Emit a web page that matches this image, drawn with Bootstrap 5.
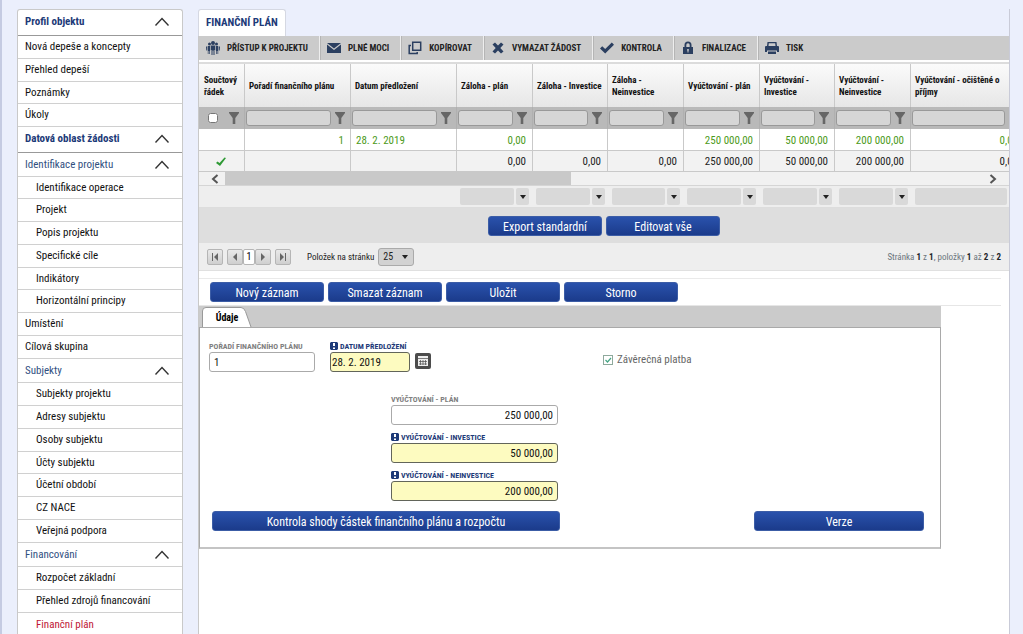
<!DOCTYPE html>
<html lang="cs">
<head>
<meta charset="utf-8">
<meta name="viewport" content="width=device-width, initial-scale=1">
<title>Finanční plán</title>
<link href="https://cdn.jsdelivr.net/npm/bootstrap@5.3.0/dist/css/bootstrap.min.css" rel="stylesheet">
<style>
:root{--navy:#1d3a78;--ink:#2b3f60;--line:#c9c9c9;--band:#cbcbcb}
body{background:#ebeffc;color:#111;font-family:"Roboto Condensed","Liberation Sans Narrow","Liberation Sans",sans-serif;font-size:11px;line-height:14px}
button,input,select{font-family:inherit}
a{color:inherit;text-decoration:none}
.shell{min-height:100vh;border-left:2px solid #c5cbe2;padding:9px 13px 0 15px;gap:15px}
/* side menu */
.side{width:166px;border:1px solid var(--line);border-bottom:0;border-radius:3px 3px 0 0}
.side a{height:23px;padding:0 12px 0 7px;border-bottom:1px solid #d0d0d0}
.side li:nth-child(4n) > a.leaf{height:22px}
.side a.deep{padding-left:18px}
.side a.top-group{height:26px;padding-bottom:2px;color:var(--navy);font-weight:700;border-bottom-color:#999}
.side a.sub-group{height:24px;color:#31507f}
.side a.current{color:#c01736}
.chev{width:16px;height:10px;fill:none;stroke:#333;stroke-width:1.4}
/* main */
.main{min-width:0;border-right:1px solid #c9cbd8}
.page-tab{background:#fff;height:27px;padding:0 7px;border:1px solid #d5d8e2;border-bottom:0;border-radius:3px 3px 0 0;color:var(--navy);font-size:11px;font-weight:700}
.sheet{border-left:1px solid var(--line)}
.tools{background:var(--band);height:24px}
.tools button{border:0;border-right:1px solid #eee;box-shadow:1px 0 #b5b5b5;background:none;font-size:9px;font-weight:700;color:#222;padding:0 11px 0 7px;gap:7px}
.tools button:last-child{border:0;box-shadow:none}
.tools svg{width:14px;height:14px;fill:var(--ink);color:var(--ink)}
.grid-box{overflow:hidden;margin-top:2px;border-top:2px solid #dcdcdc}
.grid-table{width:826px;table-layout:fixed;border-collapse:separate;border-spacing:0;font-size:11px}
.grid-table th,.grid-table td{border-right:1px solid var(--line);padding:2px 6px 0 5px}
.grid-table thead th{height:43px;padding:1px 4px 0;font-size:9px;line-height:12px;background:linear-gradient(#fbfbfb,#e6e6e6)}
.grid-table thead th:first-child{padding-left:5px}
.grid-table .filters td{height:22px;background:#b9b9b9;border-color:#b0b0b0;padding:0 5px 0 1px}
.filters input[type=text]{min-width:0;height:16px;background:#d6d6d6;border:1px solid #999;border-radius:3px}
.filters input[type=checkbox]{width:10px;height:10px;margin:0}
.funnel{width:10px;height:12px;fill:#666;flex:none}
.grid-table .num{text-align:right}
.row-plan td{height:22px;color:#4c9a1a;border-bottom:1px solid var(--line)}
.row-sum td{height:21px;background:#f2f2f2;color:#222;border-bottom:1px solid var(--line)}
.hscroll{height:14px;background:#f1f1f1;padding:0 12px;border-bottom:1px solid #d5d5d5}
.hscroll svg{width:8px;height:10px;fill:none;stroke:#555;stroke-width:2}
.thumb{width:44%;background:#c9c9c9;margin-left:6px}
.aggs{height:22px;background:#eee;overflow:hidden;padding-left:261px;border-bottom:1px solid #ddd}
.agg{width:76px;flex:none;gap:2px;padding-right:7px}
.agg:nth-child(3){width:75px}
.agg button,.agg span{background:#d9d9d9;border:0;border-radius:2px;height:17px}
.agg button{width:13px}
.agg.wide{width:114px}
.caret{width:6px;height:4px;fill:#222;display:block}
.export{height:35px;background:#dedede;gap:4px}
.pager{height:28px;background:#eee;font-size:9px;color:#222;padding:0 8px;border-bottom:1px solid #e0e0e0}
.pager button{width:16px;height:16px;border:1px solid #b5b5b5;border-radius:2px;background:linear-gradient(#e9e9e9,#cfcfcf)}
.pager button svg{width:8px;height:8px;fill:#666;display:block}
.pager .pg{width:12px;background:#fff;font-size:10px;line-height:14px}
.pager select{height:18px;width:36px;border:1px solid #aaa;border-radius:3px;background:#d2d2d2;appearance:none;padding:0 4px;font-size:10px;color:#222}
.select-wrap .caret{position:absolute;right:6px;top:7px}
.blue{height:20px;width:114px;border:1px solid #3c5da6;border-radius:3px;background:linear-gradient(#2a52ac,#1b3b8b);color:#fff;font-size:12px;line-height:20px;font-weight:400}
.actions{margin:7px 8px 0 0;padding:3px 0 3px 11px;gap:4px;border-top:1px solid #eaeaea;border-bottom:1px solid #e6e6e6}
.card-area{max-width:742px}
.tabs{height:21px;background:var(--band);padding:1px 0 0 3px}
.tabs button{width:50px;height:20px;border:0;background:none;font-size:10px;font-weight:700;padding:2px 0 0}
.tabs button svg{position:absolute;left:0;top:0;width:50px;height:20px;z-index:-1}
.panel{border:1px solid #a9a9a9;border-bottom:2px solid #c4c4c4;padding:14px 16px 16px 9px}
.fld label{font-size:8px;line-height:10px;height:10px;font-weight:700;color:#808080;white-space:nowrap}
.fld input{display:block;height:20px;border:1px solid #aaa;border-radius:3px;padding:0 4px;font-size:11px;color:#111;width:100%}
.fld.req label{color:var(--navy)}
.fld.req input{background:#fdfbc0;border-color:#62655a}
.order{width:106px}
.submitted{width:80px;margin-left:15px}
.fld.submitted input{padding:0 1px}
.flag{width:8px;height:8px;fill:var(--navy);margin-right:2px;vertical-align:-1px}
.cal{width:16px;height:16px;border:0;background:none;margin:0 0 3px 5px}
.final{margin:0 0 5px 172px;gap:4px;color:#666}
.final input{appearance:none;width:10px;height:10px;margin:0;border:1px solid #8ea99c;background:#fff url("data:image/svg+xml,%3Csvg xmlns='http://www.w3.org/2000/svg' viewBox='0 0 8 8'%3E%3Cpath d='M1.500 4l2 2 3.500-4' fill='none' stroke='%2345a585' stroke-width='1.200'/%3E%3C/svg%3E")}
.amounts{width:167px;margin:23px 0 10px 182px;gap:8px}
.amounts input{text-align:right}
.foot{padding-left:3px}
.check-btn{width:348px}
.version-btn{width:170px}
</style>
</head>
<body>
<svg class="d-none">
 <symbol id="chev" viewBox="0 0 16 10"><path d="M1.500 8.500 8 1.500l6.500 7"/></symbol>
 <symbol id="funnel" viewBox="0 0 10 12"><path d="M0 0h10v1L6.300 6v6H3.700V6L0 1z"/></symbol>
 <symbol id="caret" viewBox="0 0 6 4"><path d="M0 0h6L3 4z"/></symbol>
 <symbol id="flag" viewBox="0 0 8 8"><path fill-rule="evenodd" d="M1 0h6l1 1v6L7 8H1L0 7V1zM3 1v3h2V1zM3 5.500V7h2V5.500z"/></symbol>
</svg>
<div class="shell d-flex align-items-stretch">
 <nav class="side bg-white flex-shrink-0" aria-label="Navigace">
  <ul class="list-unstyled mb-0">
   <li><a href="#" class="top-group d-flex align-items-center justify-content-between">Profil objektu<svg class="chev"><use href="#chev"/></svg></a></li>
   <li><a href="#" class="leaf d-flex align-items-center">Nová depeše a koncepty</a></li>
   <li><a href="#" class="leaf d-flex align-items-center">Přehled depeší</a></li>
   <li><a href="#" class="leaf d-flex align-items-center">Poznámky</a></li>
   <li><a href="#" class="leaf d-flex align-items-center">Úkoly</a></li>
   <li><a href="#" class="top-group d-flex align-items-center justify-content-between">Datová oblast žádosti<svg class="chev"><use href="#chev"/></svg></a></li>
   <li><a href="#" class="sub-group d-flex align-items-center justify-content-between">Identifikace projektu<svg class="chev"><use href="#chev"/></svg></a></li>
   <li><a href="#" class="leaf deep d-flex align-items-center">Identifikace operace</a></li>
   <li><a href="#" class="leaf deep d-flex align-items-center">Projekt</a></li>
   <li><a href="#" class="leaf deep d-flex align-items-center">Popis projektu</a></li>
   <li><a href="#" class="leaf deep d-flex align-items-center">Specifické cíle</a></li>
   <li><a href="#" class="leaf deep d-flex align-items-center">Indikátory</a></li>
   <li><a href="#" class="leaf deep d-flex align-items-center">Horizontální principy</a></li>
   <li><a href="#" class="leaf d-flex align-items-center">Umístění</a></li>
   <li><a href="#" class="leaf d-flex align-items-center">Cílová skupina</a></li>
   <li><a href="#" class="sub-group d-flex align-items-center justify-content-between">Subjekty<svg class="chev"><use href="#chev"/></svg></a></li>
   <li><a href="#" class="leaf deep d-flex align-items-center">Subjekty projektu</a></li>
   <li><a href="#" class="leaf deep d-flex align-items-center">Adresy subjektu</a></li>
   <li><a href="#" class="leaf deep d-flex align-items-center">Osoby subjektu</a></li>
   <li><a href="#" class="leaf deep d-flex align-items-center">Účty subjektu</a></li>
   <li><a href="#" class="leaf deep d-flex align-items-center">Účetní období</a></li>
   <li><a href="#" class="leaf deep d-flex align-items-center">CZ NACE</a></li>
   <li><a href="#" class="leaf deep d-flex align-items-center">Veřejná podpora</a></li>
   <li><a href="#" class="sub-group d-flex align-items-center justify-content-between">Financování<svg class="chev"><use href="#chev"/></svg></a></li>
   <li><a href="#" class="leaf deep d-flex align-items-center">Rozpočet základní</a></li>
   <li><a href="#" class="leaf deep d-flex align-items-center">Přehled zdrojů financování</a></li>
   <li><a href="#" class="leaf deep current border-0 d-flex align-items-center" aria-current="page">Finanční plán</a></li>
  </ul>
 </nav>

 <main class="main flex-grow-1 d-flex flex-column">
  <div class="d-flex"><h1 class="page-tab m-0 d-flex align-items-center">FINANČNÍ PLÁN</h1></div>
  <div class="sheet bg-white flex-grow-1">
   <div class="tools d-flex">
    <button type="button" class="d-flex align-items-center"><svg viewBox="0 0 14 14"><circle cx="7" cy="2" r="2"/><circle cx="3.500" cy="3" r="1.500"/><circle cx="10.500" cy="3" r="1.500"/><path d="M4.800 4.500h4.400V9H8.500v5h-1V9.500h-1V14h-1V9h-.7zM1.800 5h2.300v5h-.3v3h-.7v-3h-.6v3h-.7zM9.900 5h2.300v8h-.7v-3h-.6v3h-.7v-3h-.3zM0 5.500h1.200v4H.3zM12.800 5.500H14l-.3 4h-.9z"/></svg>PŘÍSTUP K PROJEKTU</button>
    <button type="button" class="d-flex align-items-center"><svg viewBox="0 0 14 14"><path d="M0 2h14L7 7.500zM0 3.500 7 9l7-5.500V12H0z"/></svg>PLNÉ MOCI</button>
    <button type="button" class="d-flex align-items-center"><svg viewBox="0 0 14 14"><path fill="none" stroke="currentColor" stroke-width="1.500" d="M4.700 1.200h8v8h-8zM3 4.500H1.200v8h8V11"/></svg>KOPÍROVAT</button>
    <button type="button" class="d-flex align-items-center"><svg viewBox="0 0 14 14"><path d="M1.500 3.500 4 1.500l3 3 3-3 2.500 2L9.300 7l3.200 3.500-2.500 2-3-3-3 3-2.500-2L4.700 7z"/></svg>VYMAZAT ŽÁDOST</button>
    <button type="button" class="d-flex align-items-center"><svg viewBox="0 0 14 14"><path d="M0 7.500 2.200 5.300l3 2.700L11.800 1.500 14 3.700 5.200 12.500z"/></svg>KONTROLA</button>
    <button type="button" class="d-flex align-items-center"><svg viewBox="0 0 14 14"><path fill-rule="evenodd" d="M2 6h1.500V4a3.500 3.500 0 0 1 7 0v2H12v7H2zm3.300 0h3.400V4a1.700 1.700 0 0 0-3.400 0zM6.200 8v1.500l.3.500v1.500h1V10l.3-.5V8z"/></svg>FINALIZACE</button>
    <button type="button" class="d-flex align-items-center"><svg viewBox="0 0 14 14"><path fill-rule="evenodd" d="M2.500 1h9l.5 4h1.500l.5 1v5h-2V9.500H2V11H0V6l.5-1H2zm1.300 1.200L3.500 5h7l-.3-2.800zM3 10.500h8V13H3z"/></svg>TISK</button>
   </div>

   <div class="grid-box">
    <table class="grid-table">
     <colgroup><col style="width:46px"><col style="width:106px"><col style="width:106px"><col style="width:76px"><col style="width:75px"><col style="width:76px"><col style="width:76px"><col style="width:75px"><col style="width:76px"><col></colgroup>
     <thead>
      <tr><th>Součtový řádek</th><th>Pořadí finančního plánu</th><th>Datum předložení</th><th>Záloha - plán</th><th class="text-nowrap">Záloha - Investice</th><th>Záloha - Neinvestice</th><th class="text-nowrap">Vyúčtování - plán</th><th>Vyúčtování - Investice</th><th>Vyúčtování - Neinvestice</th><th>Vyúčtování - očištěné o<br>příjmy</th></tr>
     </thead>
     <tbody>
      <tr class="filters">
       <td><div class="d-flex align-items-center justify-content-between ps-2"><input type="checkbox" aria-label="Součtový řádek"><svg class="funnel"><use href="#funnel"/></svg></div></td>
       <td><div class="d-flex align-items-center gap-1"><input type="text" class="flex-fill" aria-label="Filtr: pořadí"><svg class="funnel"><use href="#funnel"/></svg></div></td>
       <td><div class="d-flex align-items-center gap-1"><input type="text" class="flex-fill" aria-label="Filtr: datum"><svg class="funnel"><use href="#funnel"/></svg></div></td>
       <td><div class="d-flex align-items-center gap-1"><input type="text" class="flex-fill" aria-label="Filtr: záloha plán"><svg class="funnel"><use href="#funnel"/></svg></div></td>
       <td><div class="d-flex align-items-center gap-1"><input type="text" class="flex-fill" aria-label="Filtr: záloha investice"><svg class="funnel"><use href="#funnel"/></svg></div></td>
       <td><div class="d-flex align-items-center gap-1"><input type="text" class="flex-fill" aria-label="Filtr: záloha neinvestice"><svg class="funnel"><use href="#funnel"/></svg></div></td>
       <td><div class="d-flex align-items-center gap-1"><input type="text" class="flex-fill" aria-label="Filtr: vyúčtování plán"><svg class="funnel"><use href="#funnel"/></svg></div></td>
       <td><div class="d-flex align-items-center gap-1"><input type="text" class="flex-fill" aria-label="Filtr: vyúčtování investice"><svg class="funnel"><use href="#funnel"/></svg></div></td>
       <td><div class="d-flex align-items-center gap-1"><input type="text" class="flex-fill" aria-label="Filtr: vyúčtování neinvestice"><svg class="funnel"><use href="#funnel"/></svg></div></td>
       <td><div class="d-flex align-items-center gap-1"><input type="text" class="flex-fill" aria-label="Filtr: očištěné o příjmy"><svg class="funnel"><use href="#funnel"/></svg></div></td>
      </tr>
      <tr class="row-plan"><td></td><td class="num">1</td><td>28. 2. 2019</td><td class="num">0,00</td><td></td><td></td><td class="num">250 000,00</td><td class="num">50 000,00</td><td class="num">200 000,00</td><td class="num">0,00</td></tr>
      <tr class="row-sum"><td><svg class="d-block mx-auto" width="10" height="10" viewBox="0 0 10 10" fill="#2f9a35"><path d="M0 6 1.500 4.500 3.500 6 8.500.500 10 1 4 9z"/></svg></td><td></td><td></td><td class="num">0,00</td><td class="num">0,00</td><td class="num">0,00</td><td class="num">250 000,00</td><td class="num">50 000,00</td><td class="num">200 000,00</td><td class="num">0,00</td></tr>
     </tbody>
    </table>
   </div>
   <div class="hscroll d-flex align-items-stretch">
    <svg class="align-self-center" viewBox="0 0 8 10"><path d="M6.500 1 2 5l4.500 4"/></svg>
    <div class="thumb"></div>
    <svg class="align-self-center ms-auto" viewBox="0 0 8 10"><path d="M1.500 1 6 5 1.500 9"/></svg>
   </div>
   <div class="aggs d-flex align-items-center">
    <div class="agg d-flex"><span class="flex-fill"></span><button type="button" class="p-0 d-flex align-items-center justify-content-center" aria-label="Souhrn"><svg class="caret"><use href="#caret"/></svg></button></div>
    <div class="agg d-flex"><span class="flex-fill"></span><button type="button" class="p-0 d-flex align-items-center justify-content-center" aria-label="Souhrn"><svg class="caret"><use href="#caret"/></svg></button></div>
    <div class="agg d-flex"><span class="flex-fill"></span><button type="button" class="p-0 d-flex align-items-center justify-content-center" aria-label="Souhrn"><svg class="caret"><use href="#caret"/></svg></button></div>
    <div class="agg d-flex"><span class="flex-fill"></span><button type="button" class="p-0 d-flex align-items-center justify-content-center" aria-label="Souhrn"><svg class="caret"><use href="#caret"/></svg></button></div>
    <div class="agg d-flex"><span class="flex-fill"></span><button type="button" class="p-0 d-flex align-items-center justify-content-center" aria-label="Souhrn"><svg class="caret"><use href="#caret"/></svg></button></div>
    <div class="agg d-flex"><span class="flex-fill"></span><button type="button" class="p-0 d-flex align-items-center justify-content-center" aria-label="Souhrn"><svg class="caret"><use href="#caret"/></svg></button></div>
    <div class="agg wide d-flex"><span class="flex-fill"></span><button type="button" class="p-0 d-flex align-items-center justify-content-center" aria-label="Souhrn"><svg class="caret"><use href="#caret"/></svg></button></div>
   </div>
   <div class="export d-flex align-items-center justify-content-center">
    <button type="button" class="blue p-0">Export standardní</button>
    <button type="button" class="blue p-0">Editovat vše</button>
   </div>
   <div class="pager d-flex align-items-center">
    <button type="button" class="p-0 d-flex align-items-center justify-content-center" aria-label="První"><svg viewBox="0 0 8 8"><path d="M1 0h1v8H1zM7 0v8L3 4z"/></svg></button>
    <button type="button" class="p-0 d-flex align-items-center justify-content-center ms-1" aria-label="Předchozí"><svg viewBox="0 0 8 8"><path d="M6 0v8L2 4z"/></svg></button>
    <button type="button" class="pg p-0">1</button>
    <button type="button" class="p-0 d-flex align-items-center justify-content-center" aria-label="Další"><svg viewBox="0 0 8 8"><path d="M2 0v8l4-4z"/></svg></button>
    <button type="button" class="p-0 d-flex align-items-center justify-content-center ms-1" aria-label="Poslední"><svg viewBox="0 0 8 8"><path d="M6 0h1v8H6zM1 0v8l4-4z"/></svg></button>
    <label for="perPage" class="ms-3 me-1">Položek na stránku</label>
    <span class="select-wrap position-relative d-flex"><select id="perPage"><option>25</option></select><svg class="caret"><use href="#caret"/></svg></span>
    <span class="ms-auto text-secondary">Stránka <b class="text-dark">1</b> z <b class="text-dark">1</b>, položky <b class="text-dark">1</b> až <b class="text-dark">2</b> z <b class="text-dark">2</b></span>
   </div>
   <div class="actions d-flex">
    <button type="button" class="blue p-0">Nový záznam</button>
    <button type="button" class="blue p-0">Smazat záznam</button>
    <button type="button" class="blue p-0">Uložit</button>
    <button type="button" class="blue p-0">Storno</button>
   </div>
   <div class="card-area">
    <div class="tabs"><button type="button" class="position-relative z-1"><svg viewBox="0 0 50 20"><path d="M.500 20V4Q.500.500 4 .500h35q3 0 4.500 4L49 20" fill="#fff" stroke="#999"/></svg>Údaje</button></div>
    <form class="panel">
     <div class="d-flex align-items-end">
      <div class="fld order"><label class="d-block" for="ord">POŘADÍ FINANČNÍHO PLÁNU</label><input id="ord" value="1"></div>
      <div class="fld req submitted"><label class="d-block" for="dat"><svg class="flag"><use href="#flag"/></svg>DATUM PŘEDLOŽENÍ</label><input id="dat" value="28. 2. 2019"></div>
      <button type="button" class="cal p-0 d-flex" aria-label="Kalendář"><svg width="16" height="16" viewBox="0 0 16 16"><rect width="16" height="16" rx="2" fill="#4c4c4c"/><rect x="3" y="3" width="10" height="10" fill="#eee"/><path stroke="#4c4c4c" d="M3 5.500h10M5.500 7v5M8 7v5M10.500 7v5M4 8.500h8M4 11h8" stroke-width=".7"/></svg></button>
      <label class="final d-flex align-items-center"><input type="checkbox" checked disabled><span>Závěrečná platba</span></label>
     </div>
     <div class="amounts d-flex flex-column">
      <div class="fld"><label class="d-block" for="a1">VYÚČTOVÁNÍ - PLÁN</label><input id="a1" value="250 000,00"></div>
      <div class="fld req"><label class="d-block" for="a2"><svg class="flag"><use href="#flag"/></svg>VYÚČTOVÁNÍ - INVESTICE</label><input id="a2" value="50 000,00"></div>
      <div class="fld req"><label class="d-block" for="a3"><svg class="flag"><use href="#flag"/></svg>VYÚČTOVÁNÍ - NEINVESTICE</label><input id="a3" value="200 000,00"></div>
     </div>
     <div class="foot d-flex justify-content-between">
      <button type="button" class="blue check-btn p-0">Kontrola shody částek finančního plánu a rozpočtu</button>
      <button type="button" class="blue version-btn p-0">Verze</button>
     </div>
    </form>
   </div>
  </div>
 </main>
</div>
<script src="https://cdn.jsdelivr.net/npm/bootstrap@5.3.0/dist/js/bootstrap.bundle.min.js"></script>
</body>
</html>
